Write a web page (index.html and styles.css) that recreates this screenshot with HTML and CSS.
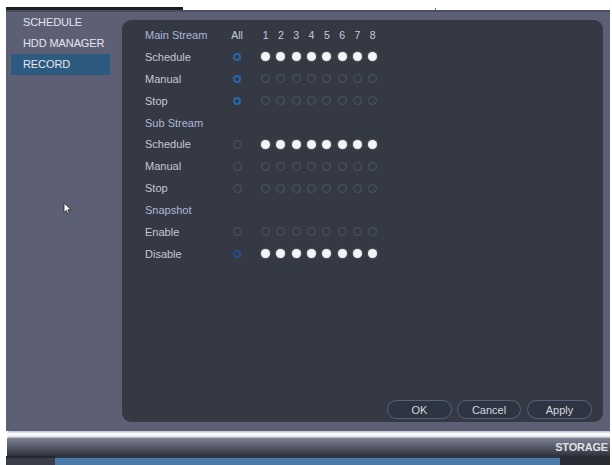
FILE: index.html
```html
<!DOCTYPE html>
<html>
<head>
<meta charset="utf-8">
<link rel="stylesheet" href="styles.css">
</head>
<body>
<div class="page">
  <div class="topbar">
    <div class="topbar-dark"></div>
    <div class="topbar-tick"></div>
  </div>
  <div class="window">
    <nav class="sidebar">
      <div class="menu-item">SCHEDULE</div>
      <div class="menu-item">HDD MANAGER</div>
      <div class="menu-item active">RECORD</div>
      <svg class="cursor" width="9" height="13" viewBox="0 0 9 13"><path d="M1 1 L1 10.5 L3.3 8.4 L5 12 L6.4 11.3 L4.8 7.8 L8 7.6 Z" fill="#fff" stroke="#222" stroke-width="0.8" stroke-linejoin="round"/></svg>
    </nav>
    <main class="panel">
      <div class="grid">
        <div class="row">
          <div class="lbl section">Main Stream</div>
          <div class="all head">All</div>
          <div class="cells head">
            <span class="c">1</span><span class="c">2</span><span class="c">3</span><span class="c">4</span><span class="c">5</span><span class="c">6</span><span class="c">7</span><span class="c">8</span>
          </div>
        </div>
        <div class="row">
          <div class="lbl">Schedule</div>
          <div class="all"><i class="dot blue"></i></div>
          <div class="cells">
            <span class="c"><i class="dot on"></i></span><span class="c"><i class="dot on"></i></span><span class="c"><i class="dot on"></i></span><span class="c"><i class="dot on"></i></span><span class="c"><i class="dot on"></i></span><span class="c"><i class="dot on"></i></span><span class="c"><i class="dot on"></i></span><span class="c"><i class="dot on"></i></span>
          </div>
        </div>
        <div class="row">
          <div class="lbl">Manual</div>
          <div class="all"><i class="dot blue"></i></div>
          <div class="cells">
            <span class="c"><i class="dot off"></i></span><span class="c"><i class="dot off"></i></span><span class="c"><i class="dot off"></i></span><span class="c"><i class="dot off"></i></span><span class="c"><i class="dot off"></i></span><span class="c"><i class="dot off"></i></span><span class="c"><i class="dot off"></i></span><span class="c"><i class="dot off"></i></span>
          </div>
        </div>
        <div class="row">
          <div class="lbl">Stop</div>
          <div class="all"><i class="dot blue"></i></div>
          <div class="cells">
            <span class="c"><i class="dot off"></i></span><span class="c"><i class="dot off"></i></span><span class="c"><i class="dot off"></i></span><span class="c"><i class="dot off"></i></span><span class="c"><i class="dot off"></i></span><span class="c"><i class="dot off"></i></span><span class="c"><i class="dot off"></i></span><span class="c"><i class="dot off"></i></span>
          </div>
        </div>
        <div class="row">
          <div class="lbl section">Sub Stream</div>
        </div>
        <div class="row">
          <div class="lbl">Schedule</div>
          <div class="all"><i class="dot off"></i></div>
          <div class="cells">
            <span class="c"><i class="dot on"></i></span><span class="c"><i class="dot on"></i></span><span class="c"><i class="dot on"></i></span><span class="c"><i class="dot on"></i></span><span class="c"><i class="dot on"></i></span><span class="c"><i class="dot on"></i></span><span class="c"><i class="dot on"></i></span><span class="c"><i class="dot on"></i></span>
          </div>
        </div>
        <div class="row">
          <div class="lbl">Manual</div>
          <div class="all"><i class="dot off"></i></div>
          <div class="cells">
            <span class="c"><i class="dot off"></i></span><span class="c"><i class="dot off"></i></span><span class="c"><i class="dot off"></i></span><span class="c"><i class="dot off"></i></span><span class="c"><i class="dot off"></i></span><span class="c"><i class="dot off"></i></span><span class="c"><i class="dot off"></i></span><span class="c"><i class="dot off"></i></span>
          </div>
        </div>
        <div class="row">
          <div class="lbl">Stop</div>
          <div class="all"><i class="dot off"></i></div>
          <div class="cells">
            <span class="c"><i class="dot off"></i></span><span class="c"><i class="dot off"></i></span><span class="c"><i class="dot off"></i></span><span class="c"><i class="dot off"></i></span><span class="c"><i class="dot off"></i></span><span class="c"><i class="dot off"></i></span><span class="c"><i class="dot off"></i></span><span class="c"><i class="dot off"></i></span>
          </div>
        </div>
        <div class="row">
          <div class="lbl section">Snapshot</div>
        </div>
        <div class="row">
          <div class="lbl">Enable</div>
          <div class="all"><i class="dot off"></i></div>
          <div class="cells">
            <span class="c"><i class="dot off"></i></span><span class="c"><i class="dot off"></i></span><span class="c"><i class="dot off"></i></span><span class="c"><i class="dot off"></i></span><span class="c"><i class="dot off"></i></span><span class="c"><i class="dot off"></i></span><span class="c"><i class="dot off"></i></span><span class="c"><i class="dot off"></i></span>
          </div>
        </div>
        <div class="row">
          <div class="lbl">Disable</div>
          <div class="all"><i class="dot blue dim"></i></div>
          <div class="cells">
            <span class="c"><i class="dot on"></i></span><span class="c"><i class="dot on"></i></span><span class="c"><i class="dot on"></i></span><span class="c"><i class="dot on"></i></span><span class="c"><i class="dot on"></i></span><span class="c"><i class="dot on"></i></span><span class="c"><i class="dot on"></i></span><span class="c"><i class="dot on"></i></span>
          </div>
        </div>
      </div>
      <div class="actions">
        <button class="btn ok">OK</button>
        <button class="btn cancel">Cancel</button>
        <button class="btn apply">Apply</button>
      </div>
    </main>
  </div>
  <div class="statusbar">
    <div class="glow"></div>
    <div class="storage">STORAGE</div>
    <div class="strip">
      <div class="strip-left"></div>
      <div class="strip-blue"></div>
      <div class="strip-right"></div>
    </div>
  </div>
</div>
</body>
</html>
```
FILE: styles.css
```css
* { box-sizing: border-box; }
html, body { margin: 0; padding: 0; background: #ffffff; }
body {
  width: 612px;
  height: 465px;
  overflow: hidden;
  font-family: "Liberation Sans", Arial, sans-serif;
  font-size: 11px;
}
.page {
  padding-top: 7px;
  padding-left: 6px;
  padding-right: 2px;
  display: flex;
  flex-direction: column;
  height: 465px;
}
.topbar {
  height: 3px;
  display: flex;
  align-items: flex-end;
}
.topbar-dark {
  width: 177px;
  height: 3px;
  background: #1d1e24;
}
.topbar-tick {
  width: 1px;
  height: 2px;
  margin-left: 252px;
  background: #6a6c78;
}
.window {
  height: 421px;
  background: #5d6074;
  border-top: 2px solid #4b4d5e;
  display: flex;
}
.sidebar {
  width: 116px;
  position: relative;
  padding-top: 0;
}
.menu-item {
  height: 21px;
  line-height: 21px;
  padding-left: 17px;
  color: #e4e6ee;
  font-size: 11px;
  letter-spacing: -0.1px;
}
.menu-item.active {
  margin-left: 5px;
  width: 99px;
  padding-left: 12px;
  background: #2d5b80;
}
.cursor {
  position: absolute;
  left: 57px;
  top: 190px;
}
.panel {
  flex: 1;
  margin: 8px 7px 9px 0;
  background: #353944;
  border-radius: 9px;
  display: flex;
  flex-direction: column;
  padding: 4px 11px 2px 23px;
}
.grid {
  display: flex;
  flex-direction: column;
  flex: 1;
}
.row {
  height: 21.9px;
  display: flex;
  align-items: center;
}
.lbl {
  width: 84px;
  color: #c5c8d3;
}
.lbl.section {
  color: #b0b7d6;
}
.all {
  width: 16px;
  margin-right: 13px;
  display: flex;
  justify-content: center;
  color: #c8ccd8;
}
.cells {
  display: flex;
}
.c {
  width: 15.3px;
  display: flex;
  justify-content: center;
  color: #c8ccd8;
}
.head {
  font-size: 10.5px;
}
.dot {
  display: block;
  width: 9px;
  height: 9px;
  border-radius: 50%;
}
.dot.on {
  background: #f4f4f7;
  box-shadow: 0 0 2px rgba(255, 255, 255, 0.45);
}
.dot.off {
  border: 1px solid #4f5668;
}
.dot.blue {
  width: 8px;
  height: 8px;
  border: 2px solid #2d66a0;
  background: #2b3a4d;
}
.dot.blue.dim {
  border-color: #2a4d80;
}
.actions {
  display: flex;
  justify-content: flex-end;
  gap: 5px;
  padding-bottom: 1px;
}
.btn {
  height: 19px;
  border-radius: 10px;
  border: 1px solid #56627a;
  background: #2e3542;
  color: #d3d6de;
  font-family: "Liberation Sans", Arial, sans-serif;
  font-size: 11px;
  padding: 0;
}
.btn.ok { width: 65px; }
.btn.cancel { width: 64px; }
.btn.apply { width: 65px; margin-left: 1px; }
.statusbar {
  display: flex;
  flex-direction: column;
  margin-left: 1px;
}
.glow {
  height: 7px;
  border-radius: 3px 0 0 3px;
  background: linear-gradient(#b8bccb, #ffffff 40%, #f4f5f9 70%, #a9adbd);
}
.storage {
  height: 18px;
  background: linear-gradient(#7d8192, #5a5d6d 45%, #2f313b);
  color: #dfe1e7;
  font-weight: bold;
  font-size: 11px;
  letter-spacing: -0.2px;
  text-align: right;
  padding-right: 2px;
  padding-top: 2px;
  line-height: 14px;
}
.strip {
  height: 9px;
  display: flex;
  margin-left: -1px;
}
.strip-left {
  width: 49px;
  background: #3b3e4a;
  border-top: 2px solid #262830;
}
.strip-blue {
  flex: 1;
  background: #4c79a6;
  border-top: 2px solid #2a3444;
}
.strip-right {
  width: 50px;
  background: #2a2d36;
}
```
